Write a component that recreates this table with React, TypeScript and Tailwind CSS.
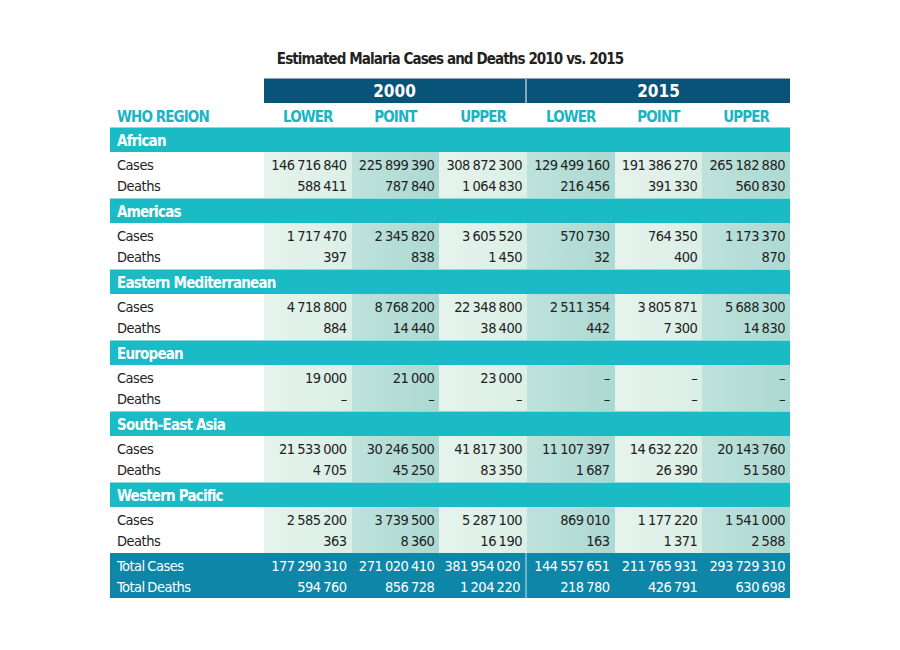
const font = { fontFamily: '"DejaVu Sans Condensed", "Liberation Sans Narrow", "Roboto Condensed", "Liberation Sans", Arial, sans-serif' };

type Section = { region: string; cases: string[]; deaths: string[] };

const sections: Section[] = [
  {
    region: "African",
    cases: ["146 716 840", "225 899 390", "308 872 300", "129 499 160", "191 386 270", "265 182 880"],
    deaths: ["588 411", "787 840", "1 064 830", "216 456", "391 330", "560 830"],
  },
  {
    region: "Americas",
    cases: ["1 717 470", "2 345 820", "3 605 520", "570 730", "764 350", "1 173 370"],
    deaths: ["397", "838", "1 450", "32", "400", "870"],
  },
  {
    region: "Eastern Mediterranean",
    cases: ["4 718 800", "8 768 200", "22 348 800", "2 511 354", "3 805 871", "5 688 300"],
    deaths: ["884", "14 440", "38 400", "442", "7 300", "14 830"],
  },
  {
    region: "European",
    cases: ["19 000", "21 000", "23 000", "–", "–", "–"],
    deaths: ["–", "–", "–", "–", "–", "–"],
  },
  {
    region: "South-East Asia",
    cases: ["21 533 000", "30 246 500", "41 817 300", "11 107 397", "14 632 220", "20 143 760"],
    deaths: ["4 705", "45 250", "83 350", "1 687", "26 390", "51 580"],
  },
  {
    region: "Western Pacific",
    cases: ["2 585 200", "3 739 500", "5 287 100", "869 010", "1 177 220", "1 541 000"],
    deaths: ["363", "8 360", "16 190", "163", "1 371", "2 588"],
  },
];

const totalCases = ["177 290 310", "271 020 410", "381 954 020", "144 557 651", "211 765 931", "293 729 310"];
const totalDeaths = ["594 760", "856 728", "1 204 220", "218 780", "426 791", "630 698"];

const light = "bg-linear-to-r from-[#e5f3ec] to-[#dbefe7]";
const dark = "bg-linear-to-r from-[#bde2db] to-[#acd9d2]";
const cellBg = [light, dark, light, dark, light, dark];

const grid = "grid grid-cols-[154px_repeat(6,1fr)]";
const line = "h-[21px] leading-[21px] whitespace-nowrap";

function SectionBlock({ s }: { s: Section }) {
  return (
    <div>
      <div className="h-[25px] bg-[#1bbbc5] border-t border-[#8fd8dc] flex items-center pl-[7px] pt-[2px] text-white font-bold text-[15px] tracking-[-0.8px]">
        {s.region}
      </div>
      <div className={`${grid} h-[46px] text-[14.5px] tracking-[-0.5px] [word-spacing:-1px] text-[#222]`}>
        <div className="pt-[3px] pl-[7px]">
          <div className={line}>Cases</div>
          <div className={line}>Deaths</div>
        </div>
        {s.cases.map((c, i) => (
          <div key={i} className={`${cellBg[i]} pt-[3px] pr-[5px] text-right`}>
            <div className={line}>{c}</div>
            <div className={line}>{s.deaths[i]}</div>
          </div>
        ))}
      </div>
    </div>
  );
}

export default function App() {
  const labels = ["LOWER", "POINT", "UPPER", "LOWER", "POINT", "UPPER"];
  return (
    <main className="min-h-[650px] w-[900px] bg-white" style={font}>
      <div className="w-[680px] ml-[110px] pt-[49px]">
        <h1 className="text-center text-[15px] font-bold text-[#222] leading-[20px] h-[29px] tracking-[-0.9px]">
          Estimated Malaria Cases and Deaths 2010 vs. 2015
        </h1>
        <div className={grid}>
          <div />
          <div className="col-span-3 h-[25px] bg-[#085479] border-t border-[#8aa3b8] border-r-2 border-r-[#8aa3b8] flex items-center justify-center pt-[2px] text-white font-bold text-[17px]">
            2000
          </div>
          <div className="col-span-3 h-[25px] bg-[#085479] border-t border-[#8aa3b8] flex items-center justify-center pt-[2px] text-white font-bold text-[17px]">
            2015
          </div>
        </div>
        <div className={`${grid} h-[24px] items-center pt-[3px] text-[#1ab4c4] font-bold text-[15px] tracking-[-0.9px]`}>
          <div className="pl-[7px]">WHO REGION</div>
          {labels.map((l, i) => (
            <div key={i} className="text-center">{l}</div>
          ))}
        </div>
        {sections.map((s) => (
          <SectionBlock key={s.region} s={s} />
        ))}
        <div className={`${grid} h-[45px] bg-[#0d86a8] text-white text-[14.5px] tracking-[-0.5px] [word-spacing:-1px]`}>
          <div className="pl-[7px] pt-[3px]">
            <div className={line}>Total Cases</div>
            <div className={line}>Total Deaths</div>
          </div>
          {totalCases.map((c, i) => (
            <div key={i} className={`text-right pr-[5px] pt-[3px] ${i === 2 ? "border-r-2 border-[#6fb3cb]" : ""}`}>
              <div className={line}>{c}</div>
              <div className={line}>{totalDeaths[i]}</div>
            </div>
          ))}
        </div>
      </div>
    </main>
  );
}
